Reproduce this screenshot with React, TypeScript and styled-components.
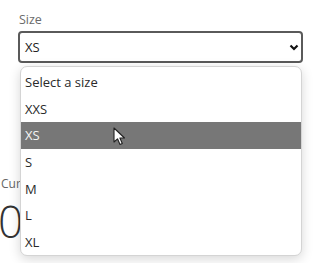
import React from 'react';
import styled, { createGlobalStyle } from 'styled-components';

const GlobalStyle = createGlobalStyle`
  html, body {
    margin: 0;
    background: #ffffff;
  }
  body {
    font-family: 'Open Sans', 'Noto Sans', sans-serif;
    overflow: hidden;
  }
`;

const Page = styled.div`
  width: 317px;
  height: 263px;
  position: relative;
  overflow: hidden;
`;

const Field = styled.div`
  position: relative;
  padding: 12px 14px 0 18px;
  display: flex;
  flex-direction: column;
  gap: 3px;
`;

const Label = styled.label`
  font-size: 12.5px;
  color: #6b6b6b;
  padding-left: 1px;
  line-height: 16px;
`;

const SelectBox = styled.div`
  height: 28px;
  border: 2px solid #5a5a5a;
  border-radius: 4px;
  display: flex;
  align-items: center;
  justify-content: space-between;
  padding: 0 2px 0 5px;
  font-size: 13px;
  color: #222;
`;

const Summary = styled.div`
  padding: 113px 0 0 1px;
  display: flex;
  flex-direction: column;
  gap: 6px;
`;

const SummaryLabel = styled.div`
  font-size: 12px;
  color: #666;
  line-height: 16px;
`;

const SummaryValue = styled.div`
  font-size: 44px;
  font-weight: 300;
  color: #333;
  line-height: 46px;
  margin-left: -3px;
`;

const Menu = styled.ul`
  position: absolute;
  top: 66px;
  left: 20px;
  width: 282px;
  height: 190px;
  margin: 0;
  padding: 2px 0 0;
  list-style: none;
  background: #fff;
  border: 1px solid #d4d4d4;
  border-radius: 7px;
  box-shadow: 0 3px 12px rgba(0, 0, 0, 0.16);
  box-sizing: border-box;
  overflow: hidden;
`;

const Option = styled.li<{ $active?: boolean }>`
  height: 26.6px;
  display: flex;
  align-items: center;
  padding-left: 4px;
  font-size: 13px;
  color: ${(p) => (p.$active ? '#f4f4f4' : '#2a2a2a')};
  background: ${(p) => (p.$active ? '#777777' : 'transparent')};
`;

const Pointer = styled.svg`
  position: absolute;
  left: 113px;
  top: 127px;
`;

const sizes = ['Select a size', 'XXS', 'XS', 'S', 'M', 'L', 'XL'];

export default function App() {
  return (
    <Page>
      <GlobalStyle />
      <Field>
        <Label>Size</Label>
        <SelectBox>
          <span>XS</span>
          <svg width="10" height="7" viewBox="0 0 10 7">
            <path d="M1.5 1.5 L5 5 L8.5 1.5" fill="none" stroke="#111" strokeWidth="2.2" />
          </svg>
        </SelectBox>
      </Field>
      <Summary>
        <SummaryLabel>Current</SummaryLabel>
        <SummaryValue>0</SummaryValue>
      </Summary>
      <Menu>
        {sizes.map((s) => (
          <Option key={s} $active={s === 'XS'}>{s}</Option>
        ))}
      </Menu>
      <Pointer width="13" height="19" viewBox="0 0 13 19">
        <path d="M1 1 L1 15 L4.5 11.8 L7 17.5 L9.3 16.5 L6.9 11 L11.5 11 Z" fill="#fff" stroke="#222" strokeWidth="1.1" strokeLinejoin="round" />
      </Pointer>
    </Page>
  );
}
